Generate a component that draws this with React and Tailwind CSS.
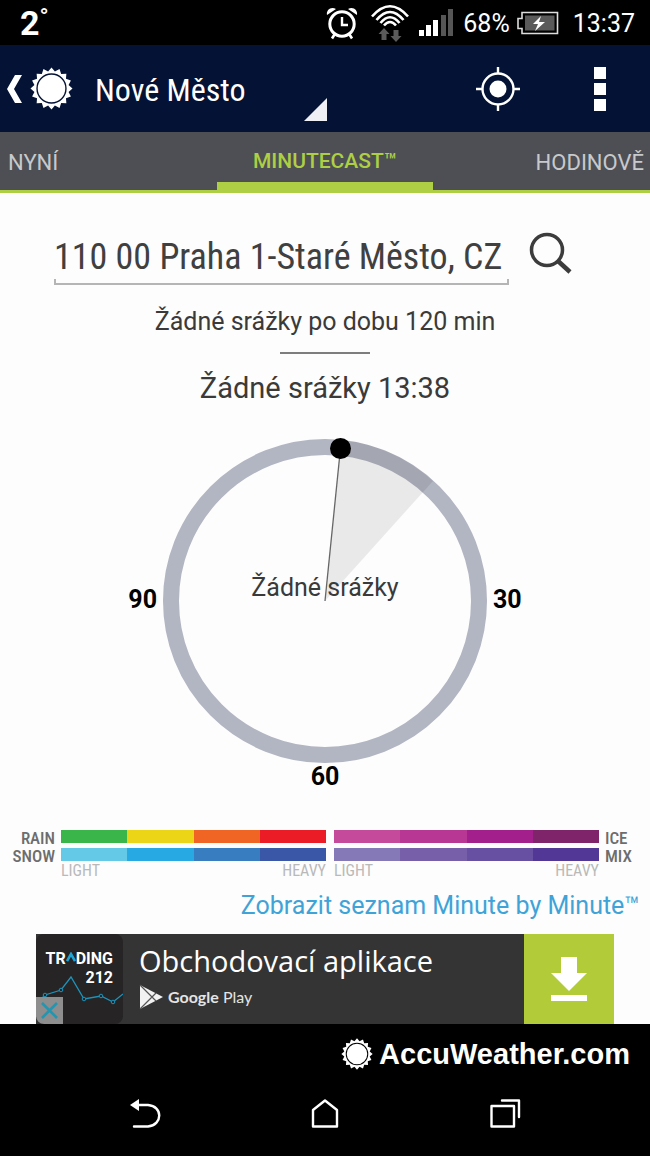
import { useState } from "react";

const TABS = [
  { id: "now", label: "NYNÍ", align: "text-left pl-2" },
  { id: "minute", label: "MINUTECAST™", align: "text-center" },
  { id: "hourly", label: "HODINOVĚ", align: "text-right pr-[6px]" },
];

const RAIN = ["bg-[#39b54a]", "bg-[#ecd517]", "bg-[#f06523]", "bg-[#eb1c26]"];
const SNOW = ["bg-[#63c9e6]", "bg-[#27aae3]", "bg-[#387dc0]", "bg-[#3a56a7]"];
const ICE = ["bg-[#c64a9b]", "bg-[#b93794]", "bg-[#a31f8b]", "bg-[#7f236b]"];
const MIX = ["bg-[#8679b8]", "bg-[#785fa9]", "bg-[#674fa1]", "bg-[#533796]"];

/** Sixteen pointed sun */
const SUN_POINTS = Array.from({ length: 32 }, (_, i) => {
  const r = i % 2 === 0 ? 21.5 : 17.8;
  const a = (i * Math.PI) / 16;
  return `${(22 + r * Math.sin(a)).toFixed(2)},${(22 - r * Math.cos(a)).toFixed(2)}`;
}).join(" ");

function SunIcon({ className, ring }) {
  return (
    <svg viewBox="0 0 44 44" className={className} aria-hidden="true">
      <polygon points={SUN_POINTS} fill="#fff" />
      <circle cx="22" cy="22" r="14.8" fill="none" stroke={ring} strokeWidth="1.4" />
    </svg>
  );
}

function StatusBar() {
  return (
    <div className="flex h-[45px] items-center bg-black pr-[15px] pl-5 text-white">
      <span className="flex-1 text-[34px] leading-[48px] font-bold">
        2<span className="align-top text-2xl leading-9 font-medium">°</span>
      </span>

      {/* Alarm */}
      <svg viewBox="0 0 32 34" className="mr-[13px] h-[34px] w-8" fill="none" stroke="#fff">
        <circle cx="16" cy="18" r="12.2" strokeWidth="3" />
        <path d="M16 11v8h6" strokeWidth="2.4" />
        <path d="M8.5 28.5L6 32.5M23.5 28.5L26 32.5" strokeWidth="2.6" />
        <path d="M1 9C0 4 5 0 10 3zM31 9C32 4 27 0 22 3z" fill="#fff" stroke="none" />
      </svg>

      {/* Wifi */}
      <svg viewBox="0 0 38 38" className="mr-[10px] h-[38px] w-[38px]" fill="none">
        <g stroke="#fff" strokeWidth="2.6">
          <path d="M1 12.5Q19 -8 37 12.5" />
          <path d="M5.500 16Q19 0 32.500 16" />
          <path d="M9.500 19Q19 7.500 28.500 19" />
          <path d="M13 21.500Q19 14.500 25 21.500" />
        </g>
        <path d="M13 24l5.500 6h-3v6h-5v-6h-3zM25 38l5.500-6h-3v-6h-5v6h-3z" fill="#5b5b5b" />
      </svg>

      {/* Signal */}
      <svg viewBox="0 0 34 28" className="mr-[10px] h-7 w-[34px]">
        <path d="M0 21h5v6H0zM7 16h5v11H7zM14 11h5v16h-5z" fill="#fff" />
        <path d="M22 6h5v21h-5zM29 0h5v27h-5z" fill="#565656" />
      </svg>

      <span className="mr-[7px] pt-[2px] text-[25px] leading-8">68%</span>

      {/* Battery */}
      <svg viewBox="0 0 42 24" className="mr-[14px] h-6 w-[42px]">
        <path d="M5 1.500H40.500V22.500H5V17.500H1V7.500H5z" fill="none" stroke="#ddd" strokeWidth="1.600" />
        <path d="M8 4.500H37.500V19.500H8z" fill="#5a5a5a" />
        <path d="M24 5L16 13h5l-3 7 10-9h-6z" fill="#fff" />
      </svg>

      <span className="pt-[2px] text-[25px] leading-8">13:37</span>
    </div>
  );
}

function Header() {
  return (
    <header className="flex h-[87px] items-center bg-[#041235] pr-[44px] pl-[6px] text-white">
      <button type="button" aria-label="Zpět" className="flex items-center gap-2">
        <svg viewBox="0 0 16 30" className="h-[30px] w-4">
          <path d="M9 1h7L8 15l8 14H9L1 15z" fill="#fff" />
        </svg>
        <SunIcon className="h-[43px] w-[43px]" ring="#041235" />
      </button>

      <button type="button" className="ml-[22px] flex h-full w-[232px] items-center justify-between">
        <span className="pt-[2px] font-['Roboto_Condensed',Roboto,sans-serif] text-[32px] leading-10">
          Nové Město
        </span>
        <svg viewBox="0 0 23 23" className="mb-[11px] h-[23px] w-[23px] self-end">
          <path d="M23 0V23H0z" fill="#eef0f6" />
        </svg>
      </button>

      <button type="button" aria-label="Poloha" className="ml-auto">
        <svg viewBox="0 0 44 44" className="h-[44px] w-[44px]" stroke="#fff" fill="none">
          <circle cx="22" cy="22" r="15.500" strokeWidth="2.400" />
          <circle cx="22" cy="22" r="8.500" fill="#fff" stroke="none" />
          <path d="M22 0V6M22 38V44M0 22H6M38 22H44" strokeWidth="2.400" />
        </svg>
      </button>

      <button type="button" aria-label="Nabídka" className="ml-[74px] flex flex-col gap-1">
        <span className="h-3 w-3 bg-white" />
        <span className="h-3 w-3 bg-white" />
        <span className="h-3 w-3 bg-white" />
      </button>
    </header>
  );
}

function Dial() {
  return (
    <div className="mt-[35px] flex flex-col items-center text-[25px] leading-7 font-bold text-black">
      <div className="flex items-center gap-[6px]">
        <span className="pb-[2px]">90</span>
        <div className="relative">
          <svg viewBox="0 0 324 324" className="h-[324px] w-[324px] overflow-visible">
            <circle cx="162" cy="162" r="154" fill="none" stroke="#b2b5c2" strokeWidth="16" />
            <path d="M162 162L178.400 0.900A162 162 0 0 1 270 42z" fill="#000" fillOpacity="0.08" />
            <path d="M162 162L177.500 9" stroke="#666" strokeWidth="1.300" />
            <circle cx="177.500" cy="9.500" r="10.500" fill="#000" />
          </svg>
          <span className="absolute inset-x-0 top-[133px] text-center leading-8 font-normal text-[#3a3a3a]">
            Žádné srážky
          </span>
        </div>
        <span className="pb-[2px]">30</span>
      </div>
      <span>60</span>
    </div>
  );
}

function Bar({ colors }) {
  return (
    <div className="flex h-[13px]">
      {colors.map((color) => (
        <span key={color} className={`flex-1 ${color}`} />
      ))}
    </div>
  );
}

function Scale({ top, bottom }) {
  return (
    <div className="flex flex-1 flex-col gap-[5px] pt-[1px]">
      <Bar colors={top} />
      <Bar colors={bottom} />
      <div className="-mt-1 flex justify-between text-base leading-[18px] text-[#b9b9b9]">
        <span>LIGHT</span>
        <span>HEAVY</span>
      </div>
    </div>
  );
}

function Legend() {
  return (
    <div className="mt-[38px] flex gap-2 font-['Roboto_Condensed',Roboto,sans-serif]">
      <div className="-mr-[2px] w-[55px] text-right text-[17px] leading-[18px] font-medium text-[#6d6d6d]">
        <p>RAIN</p>
        <p>SNOW</p>
      </div>
      <Scale top={RAIN} bottom={SNOW} />
      <Scale top={ICE} bottom={MIX} />
      <div className="-ml-[2px] w-[45px] text-[17px] leading-[18px] font-medium text-[#6d6d6d]">
        <p>ICE</p>
        <p>MIX</p>
      </div>
    </div>
  );
}

function AdBanner() {
  return (
    <div className="mx-9 mt-3 flex h-[90px] bg-[#343434] text-white">
      <div className="relative w-[87px] overflow-hidden rounded-lg bg-[#262424]">
        <div className="pt-[15px] pr-[10px] text-right text-base leading-[19px] font-bold">
          <p className="flex items-start justify-end">
            TR
            <svg viewBox="0 0 10 10" className="mt-[3px] h-[10px] w-[10px]">
              <path d="M1 9L5 2L9 9" fill="none" stroke="#1fa5d3" strokeWidth="2.600" />
            </svg>
            DING
          </p>
          <p>212</p>
        </div>
        <svg viewBox="0 0 87 40" className="absolute inset-x-0 top-[40px] h-10 w-full" stroke="#1c93bb" fill="#262424">
          <path d="M0 30L9 21L25 16L35 3L48 25L65 22L77 28L87 20" fill="none" strokeWidth="1.300" />
          <circle cx="9" cy="21" r="1.800" />
          <circle cx="25" cy="16" r="1.800" />
          <circle cx="48" cy="25" r="1.800" />
          <circle cx="65" cy="22" r="1.800" />
          <circle cx="77" cy="28" r="1.800" />
        </svg>
        <button type="button" aria-label="Zavřít reklamu" className="absolute bottom-0 left-0 bg-[#8e8e8e]">
          <svg viewBox="0 0 27 27" className="h-[27px] w-[27px]">
            <path d="M6 6L21 21M21 6L6 21" stroke="#2793ad" strokeWidth="2.600" />
          </svg>
        </button>
      </div>

      <div className="flex-1 pl-4">
        <p className="pt-[7px] font-['Open_Sans','Noto_Sans',sans-serif] text-[29px] leading-10 whitespace-nowrap">
          Obchodovací aplikace
        </p>
        <div className="mt-[3px] flex items-center gap-[5px] font-[Lato,sans-serif] text-base leading-[26px] text-[#e4e4e4]">
          <svg viewBox="0 0 24 26" className="h-[26px] w-6">
            <path d="M1 1L24 13L1 25z" fill="#f2f2f2" />
            <path d="M1 1L17 17M1 25L17 9" stroke="#555" strokeWidth="1.200" />
          </svg>
          <span>
            <span className="font-bold">Google</span> Play
          </span>
        </div>
      </div>

      <button type="button" aria-label="Stáhnout" className="flex w-[90px] items-center justify-center bg-[#b1cb39]">
        <svg viewBox="0 0 36 44" className="h-11 w-9">
          <path d="M10 0H26V16H36L18 34L0 16H10zM0 38H36V44H0z" fill="#fff" />
        </svg>
      </button>
    </div>
  );
}

function Footer() {
  return (
    <footer className="flex flex-1 flex-col bg-black text-white">
      <div className="flex items-center justify-end gap-[6px] pt-[11px] pr-5">
        <SunIcon className="h-8 w-8" ring="#000" />
        <span className="font-['Liberation_Sans',sans-serif] text-[29px] leading-[38px] font-bold">
          AccuWeather.com
        </span>
      </div>

      <nav className="flex justify-center pt-[25px]">
        <button type="button" aria-label="Zpět" className="flex w-[180px] justify-center">
          <svg viewBox="0 0 32 32" className="h-8 w-8" fill="none" stroke="#fff" strokeWidth="2.400">
            <path d="M8 7H19C34 8 34 27 19 28.500H5" strokeLinecap="round" />
            <path d="M1 7L10 1V13z" fill="#fff" stroke="none" />
          </svg>
        </button>
        <button type="button" aria-label="Domů" className="flex w-[180px] justify-center">
          <svg viewBox="0 0 32 32" className="h-8 w-8" fill="none" stroke="#fff" strokeWidth="2.400">
            <path d="M4 28.500V12L16 2.500L28 12V28.500z" strokeLinejoin="round" />
          </svg>
        </button>
        <button type="button" aria-label="Aplikace" className="flex w-[180px] justify-center">
          <svg viewBox="0 0 32 32" className="h-8 w-8" fill="none" stroke="#fff" strokeWidth="2.400">
            <path d="M2.500 8H25V28.500H2.500zM13 2.500H30V19" strokeLinejoin="round" strokeLinecap="round" />
          </svg>
        </button>
      </nav>
    </footer>
  );
}

export default function App() {
  const [tab, setTab] = useState("minute");
  const [place, setPlace] = useState("110 00 Praha 1-Staré Město, CZ");

  return (
    <div className="flex min-h-screen flex-col bg-[#fdfdfd] font-[Roboto,sans-serif]">
      <StatusBar />
      <Header />

      {/* Tabs */}
      <nav className="flex h-[61px] border-b-[3px] border-[#aecf44] bg-[#4d4f55]">
        {TABS.map(({ id, label, align }) => (
          <button
            key={id}
            type="button"
            onClick={() => setTab(id)}
            className={`w-1/3 border-b-8 pt-[10px] ${align} ${
              tab === id
                ? "border-[#aecf44] text-[21px] font-medium text-[#aecf44]"
                : "border-transparent text-[22px] text-[#c8c9cb]"
            }`}
          >
            {label}
          </button>
        ))}
      </nav>

      <main className="flex flex-col">
        {/* Location search */}
        <form onSubmit={(e) => e.preventDefault()} className="flex items-start pt-[38px] pr-[77px] pl-[54px]">
          <div className="flex-1">
            <input
              type="text"
              aria-label="Místo"
              value={place}
              onChange={(e) => setPlace(e.target.value)}
              className="block h-12 w-full pt-1 font-['Roboto_Condensed',Roboto,sans-serif] text-[36px] text-[#404040] outline-none"
            />
            <div className="h-[6px] border-x-2 border-b-2 border-[#b5b5b5]" />
          </div>
          <button type="submit" aria-label="Hledat" className="ml-[18px]">
            <svg viewBox="0 0 46 46" className="h-[46px] w-[46px]" fill="none" stroke="#3c3c3c">
              <circle cx="20" cy="19" r="15.500" strokeWidth="3.500" />
              <path d="M31 30L43 41" strokeWidth="4.500" />
            </svg>
          </button>
        </form>

        <div className="mt-[21px] flex flex-col items-center text-[#3a3a3a]">
          <p className="text-[25px] leading-8">Žádné srážky po dobu 120 min</p>
          <hr className="mt-[14px] w-[90px] border-t-2 border-[#7d7d7d]" />
          <p className="mt-[18px] text-[29px] leading-8">Žádné srážky 13:38</p>
        </div>

        <Dial />
        <Legend />

        <a href="#minutes" className="mt-[10px] mr-[10px] self-end text-[25px] leading-8 text-[#3fa3d8]">
          Zobrazit seznam Minute by Minute™
        </a>

        <AdBanner />
      </main>

      <Footer />
    </div>
  );
}
